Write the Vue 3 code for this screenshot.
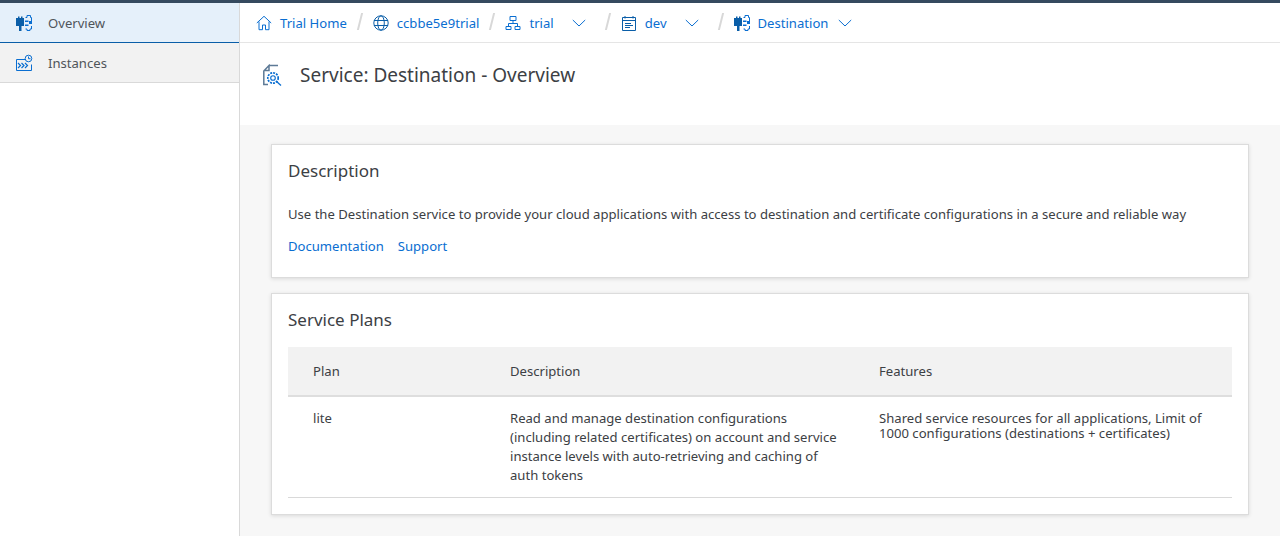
<script setup>
const crumbs = [
  { label: 'Trial Home', icon: 'home' },
  { label: 'ccbbe5e9trial', icon: 'globe' },
  { label: 'trial', icon: 'org', menu: true },
  { label: 'dev', icon: 'space', menu: true },
  { label: 'Destination', icon: 'puzzle', menu: true }
]
</script>

<template>
  <div class="page">
    <div class="topline"></div>
    <div class="main">
      <aside class="sidebar">
        <div class="nav-item active">
          <svg class="nav-icon" width="18" height="18" viewBox="0 0 18 18">
            <path d="M1 4h2V2.500h1.500V4h1.500V2.500h1.500V4H9v8H6.500v5H4v-5H1z" fill="#0a5ea8" />
            <path d="M10.500 3.500H12V1.500h3.500v2h1v6M16.500 12v3h-1.500v1.500h-3V15h-1.500" fill="none" stroke="#0a6ed1" stroke-width="1" />
            <path d="M10 6.500h3.500V8H10zM14 7h3v3h-3zM10 10.500h3.500V12H10z" fill="#0a6ed1" />
          </svg>
          <span>Overview</span>
        </div>
        <div class="nav-item">
          <svg class="nav-icon" width="18" height="18" viewBox="0 0 18 18" fill="none" stroke="#0a6ed1" stroke-width="1">
            <path d="M10 5.500H1.500v11h15v-6" />
            <path d="M3 9l2.500 2.500L3 14M6.500 9L9 11.500 6.500 14M10 9l2.500 2.500L10 14" stroke-width="1.200" />
            <circle cx="13.500" cy="4.500" r="3.300" />
            <path d="M13.500 2.500v2.200h2" />
          </svg>
          <span>Instances</span>
        </div>
      </aside>

      <div class="content">
        <nav class="breadcrumb">
          <template v-for="(crumb, i) in crumbs" :key="crumb.label">
            <span v-if="i > 0" class="slash"></span>
            <div class="crumb" :class="{ 'has-menu': crumb.menu }">
              <svg v-if="crumb.icon === 'home'" width="16" height="16" viewBox="0 0 16 16" fill="none" stroke="#0a6ed1" stroke-width="1">
                <path d="M.8 8L8 1.300 15.200 8M3 6.500v8.200h3.500V10h3v4.700h3.500V6.500" />
              </svg>
              <svg v-else-if="crumb.icon === 'globe'" width="16" height="16" viewBox="0 0 16 16" fill="none" stroke="#0a5ea8" stroke-width="1">
                <circle cx="8" cy="8" r="7.200" />
                <ellipse cx="8" cy="8" rx="3.300" ry="7.200" />
                <path d="M1 5.500h14M1 10.500h14" />
              </svg>
              <svg v-else-if="crumb.icon === 'org'" width="16" height="16" viewBox="0 0 16 16" fill="none" stroke="#0a6ed1" stroke-width="1">
                <path d="M5 1.500h6v4H5zM1 11.500h5v3H1zM10 11.500h5v3h-5zM8 5.500v3M3.500 11.500v-3h9v3" />
              </svg>
              <svg v-else-if="crumb.icon === 'space'" width="16" height="16" viewBox="0 0 16 16" fill="none" stroke="#0a5ea8" stroke-width="1">
                <path d="M1.500 2.500h13v13h-13zM1.500 5.500h13M4 1v2.500M12 1v2.500M4 8.500h6M4 10.500h8M4 12.500h5" />
              </svg>
              <svg v-else class="puzzle" width="18" height="18" viewBox="0 0 18 18">
                <path d="M1 4h2V2.500h1.500V4h1.500V2.500h1.500V4H9v8H6.500v5H4v-5H1z" fill="#0a5ea8" />
                <path d="M10.500 3.500H12V1.500h3.500v2h1v6M16.500 12v3h-1.500v1.500h-3V15h-1.500" fill="none" stroke="#0a6ed1" stroke-width="1" />
                <path d="M10 6.500h3.500V8H10zM14 7h3v3h-3zM10 10.500h3.500V12H10z" fill="#0a6ed1" />
              </svg>
              <span class="crumb-label">{{ crumb.label }}</span>
              <svg v-if="crumb.menu" class="chevron" width="14" height="8" viewBox="0 0 14 8" fill="none" stroke="#0a6ed1" stroke-width="1">
                <path d="M.8 1l6.200 6 6.200-6" />
              </svg>
            </div>
          </template>
        </nav>

        <header class="title-bar">
          <svg width="20" height="22" viewBox="0 0 20 22" fill="none">
            <path d="M7 1.500h9M1.800 18V7L7 1.500v5H1.800M1.800 18v2.500H6" stroke="#5d7a96" stroke-width="1.500" />
            <circle cx="11" cy="14" r="5.200" stroke="#0a6ed1" stroke-width="1.700" stroke-dasharray="2 1" />
            <circle cx="11" cy="14" r="2.300" stroke="#0a6ed1" stroke-width="1.100" />
            <path d="M14 17l5 4.500" stroke="#0a6ed1" stroke-width="1.300" />
          </svg>
          <h1>Service: Destination - Overview</h1>
        </header>

        <main class="cards">
          <section class="card">
            <h2>Description</h2>
            <p>Use the Destination service to provide your cloud applications with access to destination and certificate configurations in a secure and reliable way</p>
            <div class="links">
              <a>Documentation</a>
              <a>Support</a>
            </div>
          </section>

          <section class="card plans">
            <h2>Service Plans</h2>
            <div class="table">
              <div class="row head">
                <div>Plan</div>
                <div>Description</div>
                <div>Features</div>
              </div>
              <div class="row body">
                <div>lite</div>
                <div class="plan-description">Read and manage destination configurations (including related certificates) on account and service instance levels with auto-retrieving and caching of auth tokens</div>
                <div class="plan-features">Shared service resources for all applications, Limit of 1000 configurations (destinations + certificates)</div>
              </div>
            </div>
          </section>
        </main>
      </div>
    </div>
  </div>
</template>

<style scoped>
.page {
  height: 536px;
  overflow: hidden;
  display: flex;
  flex-direction: column;
  font-family: "Noto Sans", "Open Sans", sans-serif;
  font-size: 13.100px;
  color: #3c4044;
  background: #fff;
}

.topline {
  height: 3px;
  flex: none;
  background: #354a5f;
}

.main {
  flex: 1;
  display: flex;
  min-height: 0;
}

.sidebar {
  width: 239px;
  flex: none;
  border-right: 1px solid #d9d9d9;
}

.nav-item {
  box-sizing: border-box;
  height: 40px;
  display: flex;
  align-items: center;
  gap: 15px;
  padding-left: 15px;
  background: #f2f2f2;
  border-bottom: 1px solid #d9d9d9;
  color: #50555a;
}

.nav-item.active {
  background: #e5f0fa;
  border-bottom: 1px solid #0a5ea8;
}

.content {
  flex: 1;
  min-width: 0;
  display: flex;
  flex-direction: column;
}

.breadcrumb {
  height: 39px;
  flex: none;
  display: flex;
  align-items: center;
  padding-left: 16px;
  border-bottom: 1px solid #e5e5e5;
  color: #0a6ed1;
}

.crumb {
  display: flex;
  align-items: center;
  gap: 8px;
}

.crumb .puzzle {
  margin-right: -1px;
  margin-left: -1px;
}

.crumb-label {
  white-space: nowrap;
}

.chevron {
  margin-left: 10px;
}

.crumb:last-child .chevron {
  margin-left: 2px;
}

.slash {
  width: 2px;
  height: 17px;
  margin: 0 12px 2px 12px;
  background: #d8d8d8;
  transform: skewX(-14deg);
}

.has-menu + .slash {
  margin-left: 21px;
}

.title-bar {
  height: 82px;
  flex: none;
  display: flex;
  align-items: center;
  gap: 18px;
  padding: 0 0 18px 22px;
  box-sizing: border-box;
}

h1 {
  margin: 0;
  font-size: 19px;
  font-weight: 400;
}

.cards {
  flex: 1;
  display: flex;
  flex-direction: column;
  gap: 15px;
  padding: 19px 31px 0;
  background: #f7f7f7;
}

.card {
  box-sizing: border-box;
  height: 134px;
  flex: none;
  padding: 0 16px;
  background: #fff;
  border: 1px solid #dcdcdc;
  box-shadow: 0 1px 4px rgba(0, 0, 0, 0.12);
}

.card.plans {
  height: 222px;
}

h2 {
  margin: 15px 0 0;
  font-size: 17px;
  line-height: 22px;
  font-weight: 400;
}

p {
  margin: 23px 0 0;
  line-height: 18px;
}

.links {
  display: flex;
  gap: 14px;
  margin-top: 14px;
  line-height: 18px;
  color: #0a6ed1;
}

.table {
  margin-top: 16px;
}

.row {
  display: grid;
  grid-template-columns: 197px 369px 1fr;
  padding-left: 25px;
}

.row.head {
  height: 50px;
  align-items: center;
  box-sizing: border-box;
  background: #f2f2f2;
  border-bottom: 2px solid #dedede;
}

.row.body {
  height: 101px;
  box-sizing: border-box;
  padding-top: 12px;
  padding-right: 20px;
  line-height: 19px;
  border-bottom: 1px solid #d9d9d9;
}

.plan-description {
  padding-right: 30px;
}

.plan-features {
  line-height: 15px;
  padding-top: 2px;
}
</style>

<style>
html, body {
  margin: 0;
  background: #fff;
}
</style>
